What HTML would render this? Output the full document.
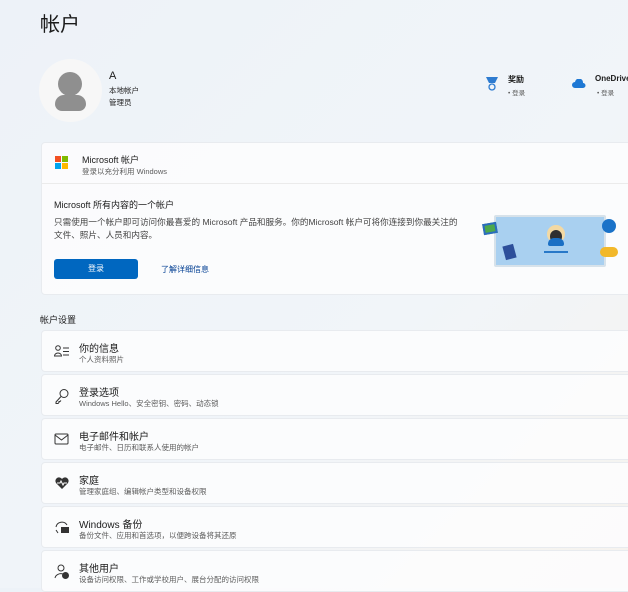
<!DOCTYPE html>
<html><head><meta charset="utf-8"><style>
*{margin:0;padding:0;box-sizing:border-box}
body{width:628px;height:588px;overflow:hidden;background:linear-gradient(135deg,#edf2f8 0%,#f1f5f9 60%,#f6f3ee 100%);font-family:"Liberation Sans","Noto Sans CJK SC",sans-serif;color:#1b1b1b;position:relative}
.abs{position:absolute}
h1{position:absolute;left:40px;top:8px;font-size:20px;font-weight:400}
.card{position:absolute;left:41px;width:600px;background:rgba(252,252,253,0.92);border:1px solid #e8ebef;border-radius:4px}
.t{font-size:10px;color:#1b1b1b;white-space:nowrap}
.s{font-size:7.5px;color:#5c5c5c;white-space:nowrap}
.row .ic{position:absolute;left:12px;top:13px}
.row .t{position:absolute;left:37px;top:9px}
.row .s{position:absolute;left:37px;top:23px}
</style></head><body>
<h1>帐户</h1>
<div class="abs" style="left:39px;top:59px;width:63px;height:63px;border-radius:50%;background:#f7f7f7"></div>
<div class="abs" style="left:58px;top:72px;width:24px;height:24px;border-radius:50%;background:#8f8f8f"></div>
<div class="abs" style="left:55px;top:95px;width:31px;height:16px;border-radius:9px 9px 7px 7px;background:#8f8f8f"></div>
<div class="abs t" style="left:109px;top:70px;font-size:11px">A</div>
<div class="abs s" style="left:109px;top:85px;color:#222">本地帐户</div>
<div class="abs s" style="left:109px;top:97px;color:#222">管理员</div>
<svg class="abs" style="left:485px;top:76px" width="14" height="16"><path d="M1 1h12l-3 6H4z" fill="#2e7bd0"/><circle cx="7" cy="11" r="3" fill="none" stroke="#2e7bd0" stroke-width="1.3"/></svg>
<div class="abs t" style="left:508px;top:74px;font-size:8px;font-weight:bold">奖励</div>
<div class="abs s" style="left:508px;top:87px;font-size:6.5px">• 登录</div>
<svg class="abs" style="left:572px;top:79px" width="14" height="10"><path d="M3 9a3 3 0 0 1 0-6a4 4 0 0 1 8 1a2.5 2.5 0 0 1 0 5z" fill="#1e78d4"/></svg>
<div class="abs t" style="left:595px;top:74px;font-size:8px;font-weight:bold">OneDrive</div>
<div class="abs s" style="left:597px;top:87px;font-size:6.5px">• 登录</div>

<div class="card" style="top:142px;height:153px">
 <div class="abs" style="left:0;top:40px;width:100%;border-top:1px solid #ebebeb"></div>
 <div class="abs" style="left:13px;top:13px;width:6px;height:6px;background:#f25022"></div>
 <div class="abs" style="left:20px;top:13px;width:6px;height:6px;background:#7fba00"></div>
 <div class="abs" style="left:13px;top:20px;width:6px;height:6px;background:#00a4ef"></div>
 <div class="abs" style="left:20px;top:20px;width:6px;height:6px;background:#ffb900"></div>
 <div class="abs t" style="left:40px;top:10px;font-size:9px">Microsoft 帐户</div>
 <div class="abs s" style="left:40px;top:23px">登录以充分利用 Windows</div>
 <div class="abs t" style="left:12px;top:55px;font-size:9px">Microsoft 所有内容的一个帐户</div>
 <div class="abs s" style="left:12px;top:73px;font-size:8.6px;color:#444">只需使用一个帐户即可访问你最喜爱的 Microsoft 产品和服务。你的Microsoft 帐户可将你连接到你最关注的</div>
 <div class="abs s" style="left:12px;top:86px;font-size:8.6px;color:#444">文件、照片、人员和内容。</div>
 <div class="abs" style="left:12px;top:116px;width:84px;height:20px;background:#0067c0;border-radius:3px;color:#fff;font-size:8px;text-align:center;line-height:20px">登录</div>
 <div class="abs t" style="left:119px;top:121px;font-size:8px;color:#003e92">了解详细信息</div>
 <div class="abs" style="left:452px;top:72px;width:112px;height:52px;background:#a9d0f0;border:2px solid #d7e2ea;border-radius:2px"></div>
 <div class="abs" style="left:505px;top:82px;width:18px;height:18px;border-radius:50%;background:#f3d9a4"></div>
 <div class="abs" style="left:508px;top:87px;width:12px;height:13px;border-radius:50%;background:#2f2f2f"></div>
 <div class="abs" style="left:506px;top:95px;width:16px;height:8px;border-radius:6px 6px 2px 2px;background:#1a6fc4"></div>
 <div class="abs" style="left:502px;top:108px;width:24px;height:2px;background:#2878c8"></div>
 <div class="abs" style="left:441px;top:80px;width:14px;height:11px;background:#4ca84c;border:2px solid #2b6cc0;transform:rotate(-10deg)"></div>
 <div class="abs" style="left:462px;top:102px;width:11px;height:14px;background:#2d4f9a;transform:rotate(-15deg)"></div>
 <div class="abs" style="left:560px;top:76px;width:14px;height:14px;border-radius:50%;background:#1a72c8"></div>
 <div class="abs" style="left:558px;top:104px;width:18px;height:10px;border-radius:5px;background:#f2b82a"></div>
</div>

<div class="abs t" style="left:40px;top:313px;font-size:9px">帐户设置</div>

<div class="card row" style="top:330px;height:42px"><svg class="ic" width="16" height="14"><circle cx="4" cy="4" r="2.3" fill="none" stroke="#333"/><path d="M0.5 12a3.5 3 0 0 1 7 0z" fill="none" stroke="#333"/><path d="M9 4h6M9 7.5h6M9 11h6" stroke="#333"/></svg><div class="t">你的信息</div><div class="s">个人资料照片</div></div>
<div class="card row" style="top:374px;height:42px"><svg class="ic" width="16" height="16"><circle cx="10" cy="5.5" r="4" fill="none" stroke="#333"/><path d="M7 8.5L2 14v1.5h2l1-1v-1h1l1-1" fill="none" stroke="#333"/></svg><div class="t">登录选项</div><div class="s">Windows Hello、安全密钥、密码、动态锁</div></div>
<div class="card row" style="top:418px;height:42px"><svg class="ic" width="16" height="14"><rect x="1" y="2" width="13" height="10" rx="1" fill="none" stroke="#333"/><path d="M1 3l6.5 5 6.5-5" fill="none" stroke="#333"/></svg><div class="t">电子邮件和帐户</div><div class="s">电子邮件、日历和联系人使用的帐户</div></div>
<div class="card row" style="top:462px;height:42px"><svg class="ic" width="16" height="14"><path d="M8 13L2 7a3 3 0 0 1 6-4a3 3 0 0 1 6 4z" fill="#333"/><path d="M3 7h3l1-2 2 4 1-2h3" fill="none" stroke="#fff"/></svg><div class="t">家庭</div><div class="s">管理家庭组、编辑帐户类型和设备权限</div></div>
<div class="card row" style="top:506px;height:42px"><svg class="ic" width="16" height="16"><path d="M2 7a6 6 0 0 1 11-2" fill="none" stroke="#333"/><path d="M2 10l2 3" stroke="#333"/><rect x="7" y="7" width="8" height="6" fill="#333"/></svg><div class="t">Windows 备份</div><div class="s">备份文件、应用和首选项，以便跨设备将其还原</div></div>
<div class="card row" style="top:550px;height:42px"><svg class="ic" width="16" height="16"><circle cx="7" cy="4" r="3" fill="none" stroke="#333"/><path d="M1 14a6 5 0 0 1 8-4" fill="none" stroke="#333"/><circle cx="11.5" cy="11.5" r="3.5" fill="#333"/></svg><div class="t">其他用户</div><div class="s">设备访问权限、工作或学校用户、展台分配的访问权限</div></div>
</body></html>
